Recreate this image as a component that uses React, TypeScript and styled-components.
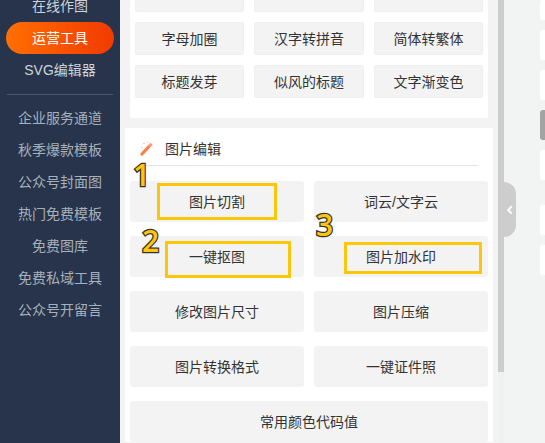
import styled, { createGlobalStyle } from 'styled-components';

const GlobalStyle = createGlobalStyle`
  html, body {
    margin: 0;
    padding: 0;
    overflow: hidden;
    background: #f3f3f3;
  }
  * {
    box-sizing: border-box;
  }
`;

const topTools = ['字母加圈', '汉字转拼音', '简体转繁体', '标题发芽', '似风的标题', '文字渐变色'];

const App = () => {
  return (
    <>
      <GlobalStyle />
      <Page>
        <Sidebar>
          <NavItem $tone="main">在线作图</NavItem>
          <ActiveItem>运营工具</ActiveItem>
          <NavItem $tone="main">SVG编辑器</NavItem>
          <NavDivider />
          <NavItem>企业服务通道</NavItem>
          <NavItem>秋季爆款模板</NavItem>
          <NavItem>公众号封面图</NavItem>
          <NavItem>热门免费模板</NavItem>
          <NavItem>免费图库</NavItem>
          <NavItem>免费私域工具</NavItem>
          <NavItem>公众号开留言</NavItem>
        </Sidebar>

        <Main>
          <TextCard>
            <ThreeGrid>
              <SmallTool />
              <SmallTool />
              <SmallTool />
              {topTools.map((name) => (
                <SmallTool key={name}>{name}</SmallTool>
              ))}
            </ThreeGrid>
          </TextCard>

          <ImageCard>
            <CardHeader>
              <WandIcon width="14" height="15" viewBox="0 0 14 15">
                <path d="M2 13 L8.5 6" stroke="#ff7d43" strokeWidth="3.2" strokeLinecap="round" />
                <path d="M8.8 5.6 L11.6 2.8" stroke="#f59a84" strokeWidth="3.2" />
                <path d="M3 2.5h2M7 1h1.5M1 6.5h1.5M12.5 7h1" stroke="#fbc9bb" strokeWidth="1" />
              </WandIcon>
              <CardTitle>图片编辑</CardTitle>
            </CardHeader>
            <ToolGrid>
              <Tool>
                图片切割
                <Mark $left={27} $top={2} $width={120} $height={37} />
                <Figure $left={3} $top={-22}>1</Figure>
              </Tool>
              <Tool>
                词云/文字云
                <Figure $left={2} $top={28}>3</Figure>
              </Tool>
              <Tool>
                一键抠图
                <Mark $left={35} $top={5} $width={126} $height={37} />
                <Figure $left={12} $top={-11}>2</Figure>
              </Tool>
              <Tool>
                图片加水印
                <Mark $left={30} $top={6} $width={138} $height={32} />
              </Tool>
              <Tool>修改图片尺寸</Tool>
              <Tool>图片压缩</Tool>
              <Tool>图片转换格式</Tool>
              <Tool>一键证件照</Tool>
              <WideTool>常用颜色代码值</WideTool>
            </ToolGrid>
          </ImageCard>
        </Main>

        <Scrollbar>
          <ScrollThumb />
        </Scrollbar>

        <SidePanel>
          <CollapseHandle>
            <svg width="8" height="10" viewBox="0 0 8 10">
              <path d="M5.8 1.2 2.2 5l3.6 3.8" fill="none" stroke="#fff" strokeWidth="2" />
            </svg>
          </CollapseHandle>
          <SideList>
            <SideBlock $height={20} />
            <SideBlock $height={30} />
            <SideBlock $height={30} />
            <SideBlock $height={30} $dark />
            <SideBlock $height={30} />
            <SideBlock $height={30} $gap={25} />
            <SideBlock $height={30} />
          </SideList>
        </SidePanel>
      </Page>
    </>
  );
};

const Page = styled.div`
  display: flex;
  width: 545px;
  height: 443px;
  overflow: hidden;
  background: #f3f3f3;
  font-family: 'Liberation Sans', 'Noto Sans CJK SC', sans-serif;
  font-size: 14px;
  color: #333;
`;

const Sidebar = styled.nav`
  flex: 0 0 120px;
  display: flex;
  flex-direction: column;
  align-items: center;
  background: #27344b;
`;

const NavItem = styled.div<{ $tone?: 'main' }>`
  width: 100%;
  height: 32px;
  line-height: 32px;
  flex: none;
  text-align: center;
  color: ${({ $tone }) => ($tone === 'main' ? '#cdd3da' : '#a7b1ba')};

  &:first-child {
    margin-top: -10px;
  }
`;

const ActiveItem = styled.div`
  flex: none;
  width: 108px;
  height: 32px;
  line-height: 32px;
  text-align: center;
  color: #fff;
  border-radius: 16px;
  background: linear-gradient(90deg, #ff6f00, #f23a00);
`;

const NavDivider = styled.div`
  flex: none;
  width: 106px;
  height: 1px;
  margin: 8px 0 7px;
  background: #4a5669;
`;

const Main = styled.main`
  flex: 0 0 373px;
  padding-left: 5px;
  display: flex;
  flex-direction: column;
  gap: 10px;
`;

const TextCard = styled.section`
  flex: none;
  width: 358px;
  margin: -32px 0 0 5px;
  padding: 11px 5px 20px;
  background: #fff;
`;

const ThreeGrid = styled.div`
  display: grid;
  grid-template-columns: 109px 110px 109px;
  grid-auto-rows: 33px;
  column-gap: 10px;
  row-gap: 10px;
`;

const SmallTool = styled.div`
  height: 33px;
  line-height: 32px;
  text-align: center;
  background: #f3f3f3;
  border: 1px solid #efefef;
  border-radius: 2px;
`;

const ImageCard = styled.section`
  flex: none;
  width: 368px;
  padding: 0 5px;
  background: #fff;
`;

const CardHeader = styled.header`
  display: flex;
  align-items: center;
  gap: 11px;
  height: 38px;
  margin: 0 10px 15px 15px;
  padding-top: 3px;
  border-bottom: 1px solid #e4e4e4;
`;

const WandIcon = styled.svg`
  flex: none;
  margin-left: -5px;
`;

const CardTitle = styled.h3`
  margin: 0;
  font-size: 14px;
  font-weight: normal;
`;

const ToolGrid = styled.div`
  display: grid;
  grid-template-columns: 174px 174px;
  grid-auto-rows: 41px;
  column-gap: 10px;
  row-gap: 14px;
`;

const Tool = styled.div`
  position: relative;
  line-height: 42px;
  text-align: center;
  background: #f3f3f3;
  border-radius: 3px;
`;

const WideTool = styled(Tool)`
  grid-column: 1 / -1;
`;

const Mark = styled.span<{ $left: number; $top: number; $width: number; $height: number }>`
  position: absolute;
  left: ${({ $left }) => $left}px;
  top: ${({ $top }) => $top}px;
  width: ${({ $width }) => $width}px;
  height: ${({ $height }) => $height}px;
  border: 3px solid #fdc609;
`;

const Figure = styled.span<{ $left: number; $top: number }>`
  position: absolute;
  left: ${({ $left }) => $left}px;
  top: ${({ $top }) => $top}px;
  font-family: 'Open Sans', 'Liberation Sans', sans-serif;
  font-size: 30px;
  font-weight: 600;
  line-height: 32px;
  color: #fdc609;
  -webkit-text-stroke: 2.5px #333;
  paint-order: stroke fill;
  z-index: 2;
`;

const Scrollbar = styled.div`
  flex: 0 0 6px;
  margin-left: 5px;
  background: #f0f0f0;
`;

const ScrollThumb = styled.div`
  height: 372px;
  background: #cdcdcd;
`;

const SidePanel = styled.aside`
  position: relative;
  flex: 1;
  display: flex;
  justify-content: flex-end;
  background: #f2f3f3;
`;

const CollapseHandle = styled.div`
  position: absolute;
  left: 0;
  top: 182px;
  width: 12px;
  height: 55px;
  display: flex;
  align-items: center;
  justify-content: center;
  background: #cdcdcd;
  border-radius: 0 12px 12px 0;
`;

const SideList = styled.div`
  width: 5px;
  display: flex;
  flex-direction: column;
  gap: 10px;
`;

const SideBlock = styled.div<{ $height: number; $dark?: boolean; $gap?: number }>`
  flex: none;
  height: ${({ $height }) => $height}px;
  margin-top: ${({ $gap }) => ($gap ? $gap - 10 : 0)}px;
  background: ${({ $dark }) => ($dark ? '#a3a3a3' : '#fff')};
  border-radius: 3px 0 0 3px;
`;

export default App;
